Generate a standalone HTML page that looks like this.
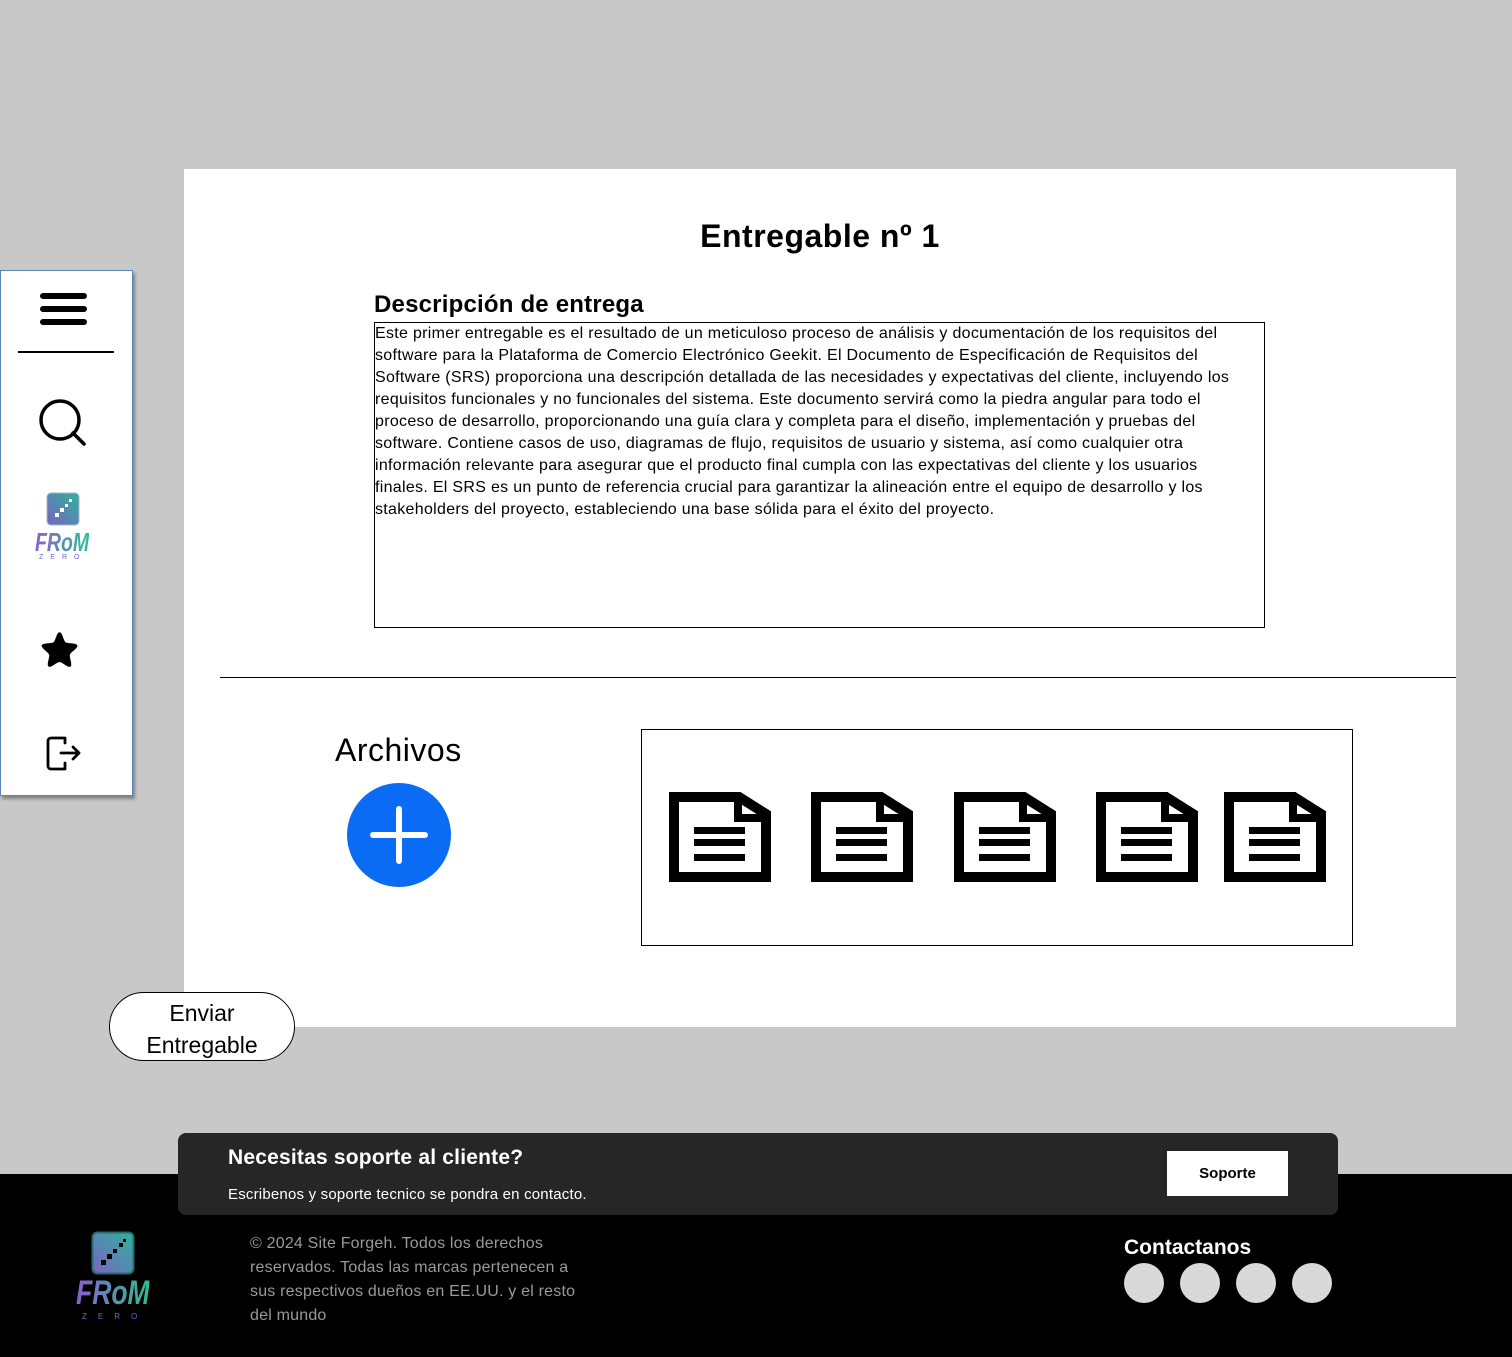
<!DOCTYPE html>
<html><head><meta charset="utf-8"><style>
*{margin:0;padding:0;box-sizing:border-box}
body{width:1512px;height:1357px;background:#c8c8c8;position:relative;overflow:hidden;font-family:"Liberation Sans","Noto Sans CJK JP",sans-serif;color:#000}
.abs{position:absolute}
.main{left:184px;top:169px;width:1272px;height:858px;background:#fff}
.side{left:0;top:270px;width:133px;height:526px;background:#fff;border:1.5px solid #5c85b5;box-shadow:2px 3px 3px rgba(0,0,0,.35)}
.desc{left:374px;top:322px;width:891px;height:306px;border:1px solid #000;font-size:16px;line-height:22px;white-space:nowrap;letter-spacing:0.3px}
.files{left:641px;top:729px;width:712px;height:217px;border:1px solid #000}
.btn{left:109px;top:992px;width:186px;height:69px;border:1px solid #000;border-radius:35px;background:#fff;text-align:center;font-size:23px;line-height:32px;padding-top:4px}
.foot{left:0;top:1174px;width:1512px;height:183px;background:#000}
.sup{left:178px;top:1133px;width:1160px;height:82px;background:#262626;border-radius:8px}
.circ{width:40px;height:40px;border-radius:50%;background:#d9d9d9;top:1263px}
.logo{font-style:italic;font-weight:bold;background:linear-gradient(90deg,#8a5ed0,#2cbf95);-webkit-background-clip:text;color:transparent;transform-origin:left top}
</style></head><body>
<div class="abs main"></div>
<div class="abs" style="left:184px;top:218px;width:1272px;text-align:center;font-size:32px;font-weight:bold;letter-spacing:0.5px;-webkit-text-stroke:0;transform:scaleY(1)"><span style="font-weight:600">Entregable nº 1</span></div>
<div class="abs" style="left:374px;top:291px;font-size:24px;font-weight:bold;letter-spacing:0.2px">Descripción de entrega</div>
<div class="abs desc">Este primer entregable es el resultado de un meticuloso proceso de análisis y documentación de los requisitos del<br>software para la Plataforma de Comercio Electrónico Geekit. El Documento de Especificación de Requisitos del<br>Software (SRS) proporciona una descripción detallada de las necesidades y expectativas del cliente, incluyendo los<br>requisitos funcionales y no funcionales del sistema. Este documento servirá como la piedra angular para todo el<br>proceso de desarrollo, proporcionando una guía clara y completa para el diseño, implementación y pruebas del<br>software. Contiene casos de uso, diagramas de flujo, requisitos de usuario y sistema, así como cualquier otra<br>información relevante para asegurar que el producto final cumpla con las expectativas del cliente y los usuarios<br>finales. El SRS es un punto de referencia crucial para garantizar la alineación entre el equipo de desarrollo y los<br>stakeholders del proyecto, estableciendo una base sólida para el éxito del proyecto.</div>
<div class="abs" style="left:220px;top:677px;width:1236px;height:1px;background:#000"></div>
<div class="abs" style="left:335px;top:732px;font-size:32px;letter-spacing:0.5px">Archivos</div>
<svg class="abs" style="left:347px;top:783px" width="104" height="104" viewBox="0 0 104 104"><circle cx="52" cy="52" r="52" fill="#0a6cf5"/><path d="M52 26V78M26 52H78" stroke="#fff" stroke-width="6" stroke-linecap="round"/></svg>
<div class="abs files"></div>
<svg width="0" height="0" style="position:absolute"><defs><g id="doc"><path d="M5 5H70L97 22V85H5Z" fill="#fff" stroke="#000" stroke-width="10"/><path d="M69 5V26H97" fill="none" stroke="#000" stroke-width="8"/><rect x="25" y="35" width="51" height="7"/><rect x="25" y="47" width="51" height="7"/><rect x="25" y="62" width="51" height="7"/></g></defs></svg>
<svg class="abs" style="left:669px;top:792px" width="102" height="90"><use href="#doc"/></svg>
<svg class="abs" style="left:811px;top:792px" width="102" height="90"><use href="#doc"/></svg>
<svg class="abs" style="left:954px;top:792px" width="102" height="90"><use href="#doc"/></svg>
<svg class="abs" style="left:1096px;top:792px" width="102" height="90"><use href="#doc"/></svg>
<svg class="abs" style="left:1224px;top:792px" width="102" height="90"><use href="#doc"/></svg>
<div class="abs btn">Enviar<br>Entregable</div>
<div class="abs side"></div>
<svg class="abs" style="left:40px;top:292px" width="48" height="36"><path d="M3 4H44M3 17H44M3 30H44" stroke="#000" stroke-width="6" stroke-linecap="round"/></svg>
<div class="abs" style="left:18px;top:351px;width:96px;height:1.5px;background:#000"></div>
<svg class="abs" style="left:38px;top:398px" width="50" height="50"><circle cx="22" cy="22" r="19" fill="none" stroke="#000" stroke-width="3.5"/><path d="M35 35L46 46" stroke="#000" stroke-width="3.5" stroke-linecap="round"/></svg>
<svg class="abs" style="left:46px;top:492px" width="34" height="34"><defs><linearGradient id="g1" x1="0" y1="1" x2="1" y2="0"><stop offset="0" stop-color="#7a63c4"/><stop offset="1" stop-color="#2db39a"/></linearGradient></defs><rect x="1" y="1" width="32" height="32" rx="4" fill="url(#g1)" stroke="#9fb7d0"/><path d="M9 25h4v-4h-4zM14 20h4v-4h-4zM19 15h3v-3h-3zM23 10h3v-3h-3z" fill="#fff"/></svg>
<div class="abs logo" style="left:35px;top:527px;font-size:26px;transform:scaleX(0.75)">FRoM</div>
<div class="abs" style="left:39px;top:554px;font-size:7px;letter-spacing:7px;color:#6a6ad0">ZERO</div>
<svg class="abs" style="left:37px;top:627px" width="47" height="47" viewBox="0 0 24 24"><path d="M12 1.2c1.5 0 2 4.3 3.1 5.1 1.1.8 5.5.2 6 1.6.4 1.4-3.4 3.4-3.8 4.7-.4 1.3 1.5 5.3.3 6.1-1.2.9-4.3-2.3-5.6-2.3s-4.4 3.2-5.6 2.3c-1.2-.8.7-4.8.3-6.1C6.3 11.3 2.5 9.3 2.9 7.9c.5-1.4 4.9-.8 6-1.6C10 5.5 10.5 1.2 12 1.2z" fill="#000" transform="translate(-0.5 1.5)"/></svg>
<svg class="abs" style="left:45px;top:735px" width="38" height="38"><path d="M20 3H6a3 3 0 0 0-3 3v25a3 3 0 0 0 3 3h14M16 18H34M28 12l6 6-6 6M20 3v5M20 28v6" fill="none" stroke="#000" stroke-width="2.8" stroke-linecap="round" stroke-linejoin="round"/></svg>
<div class="abs foot"></div>
<div class="abs sup"></div>
<div class="abs" style="left:228px;top:1146px;font-size:21px;color:#fff;font-weight:bold;letter-spacing:0.2px">Necesitas soporte al cliente?</div>
<div class="abs" style="left:228px;top:1186px;font-size:15px;color:#fff;letter-spacing:0.2px">Escribenos y soporte tecnico se pondra en contacto.</div>
<div class="abs" style="left:1167px;top:1151px;width:121px;height:45px;background:#fff;font-size:15px;text-align:center;line-height:45px;font-weight:bold">Soporte</div>
<svg class="abs" style="left:91px;top:1231px" width="44" height="44"><rect x="1.5" y="1.5" width="41" height="41" rx="5" fill="url(#g1)" stroke="#2a6a70" stroke-width="2"/><path d="M10 34h5v-5h-5zM16 28h5v-5h-5zM22 22h4v-4h-4zM28 16h4v-4h-4zM32 11h3v-3h-3z" fill="#000"/></svg>
<div class="abs logo" style="left:76px;top:1274px;font-size:34px;transform:scaleX(0.78)">FRoM</div>
<div class="abs" style="left:82px;top:1312px;font-size:8px;letter-spacing:11px;color:#6a6ad0">ZERO</div>
<div class="abs" style="left:250px;top:1232px;font-size:16px;line-height:24px;color:#9a9a9a;letter-spacing:0.2px">© 2024 Site Forgeh. Todos los derechos<br>reservados. Todas las marcas pertenecen a<br>sus respectivos dueños en EE.UU. y el resto<br>del mundo</div>
<div class="abs" style="left:1124px;top:1236px;font-size:21px;color:#fff;font-weight:bold">Contactanos</div>
<div class="abs circ" style="left:1124px"></div>
<div class="abs circ" style="left:1180px"></div>
<div class="abs circ" style="left:1236px"></div>
<div class="abs circ" style="left:1292px"></div>
</body></html>
